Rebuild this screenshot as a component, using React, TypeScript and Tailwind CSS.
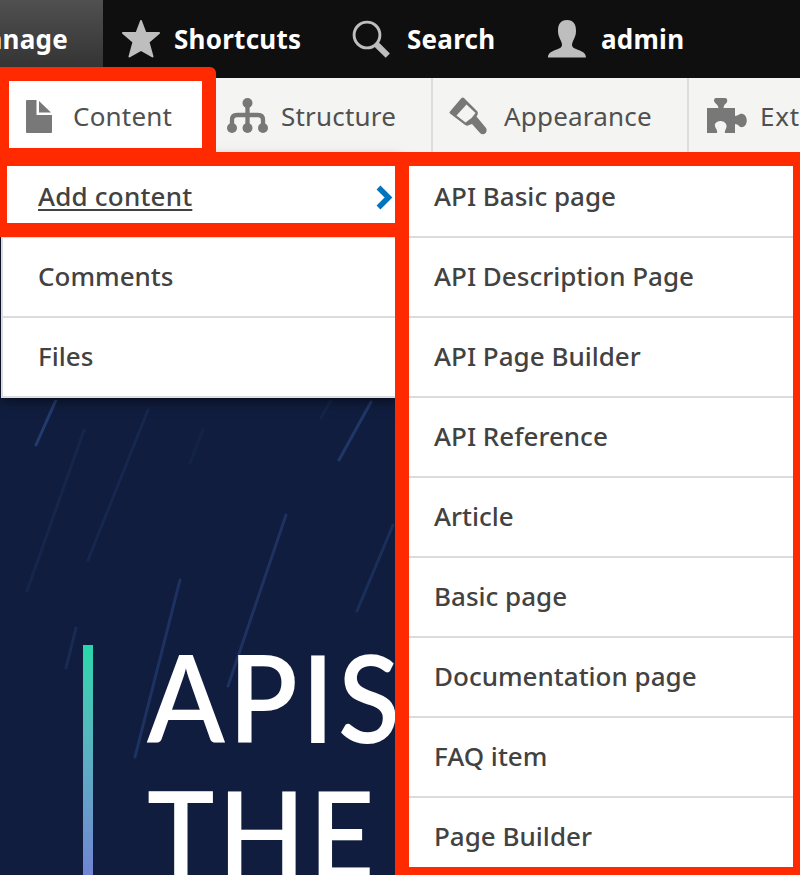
import type { ReactNode } from 'react';

const contentTypes = [
  'API Basic page',
  'API Description Page',
  'API Page Builder',
  'API Reference',
  'Article',
  'Basic page',
  'Documentation page',
  'FAQ item',
  'Page Builder',
];

const streaks = [
  { d: 'M56 0L36 45', o: 0.7 },
  { d: 'M84 30L27 191', o: 0.22 },
  { d: 'M148 10L88 160', o: 0.25 },
  { d: 'M203 30L190 63', o: 0.15 },
  { d: 'M371 2L339 60', o: 0.6 },
  { d: 'M331 0L321 18', o: 0.2 },
  { d: 'M286 115L228 286', o: 0.5 },
  { d: 'M393 125L357 211', o: 0.4 },
  { d: 'M180 180L135 357', o: 0.5 },
  { d: 'M76 228L66 268', o: 0.35 },
];

function ToolbarItem({ icon, label, className }: { icon: ReactNode; label: string; className: string }) {
  return (
    <a className={`flex h-full shrink-0 items-center ${className}`}>
      {icon}
      <span>{label}</span>
    </a>
  );
}

export default function App() {
  return (
    <div className="relative flex h-[875px] w-[800px] flex-col overflow-hidden bg-[#101d3e] font-['Noto_Sans','Open_Sans',sans-serif] text-[26px] leading-[40px] font-medium">
      <header className="flex h-[78px] shrink-0 bg-[#0f0f0f] font-bold tracking-[0.25px] text-white">
        <div className="flex w-[103px] shrink-0 items-center justify-end overflow-hidden bg-linear-to-b from-[#505050] to-[#303030] pr-[35px]">
          <span>Manage</span>
        </div>
        <ToolbarItem
          label="Shortcuts"
          className="w-[230px] gap-[14px] pl-[19px]"
          icon={
            <svg width="38" height="40" viewBox="0 0 38 40" fill="#bebebe" stroke="#bebebe" strokeWidth="2" strokeLinejoin="round">
              <path d="M19 2L23.5 14H37L26.5 23L30.5 37.500L19 31L7.500 37.500L11.500 23L1 14H14.500Z" />
            </svg>
          }
        />
        <ToolbarItem
          label="Search"
          className="w-[195px] gap-[16px] pl-[19px]"
          icon={
            <svg width="39" height="39" viewBox="0 0 39 39" fill="none" stroke="#bebebe">
              <circle cx="15" cy="15" r="12.900" strokeWidth="2.900" />
              <path d="M23.500 23.500L35.800 35.600" strokeWidth="6" />
            </svg>
          }
        />
        <ToolbarItem
          label="admin"
          className="gap-[15px] pl-[20px]"
          icon={
            <svg width="38" height="38" viewBox="0 0 38 38" fill="#bebebe">
              <path d="M19 0C12.500 0 10 4 10 11C10 18 14 20.500 14 25C13.500 31 0 29 0 37.500H38C38 29 24.500 31 24 25C24 20.500 28 18 28 11C28 4 25.500 0 19 0Z" />
            </svg>
          }
        />
      </header>

      <nav className="flex h-[74px] shrink-0 bg-[#f4f4f2] font-normal tracking-[0.2px] text-[#505050]">
        <ToolbarItem
          label="Content"
          className="w-[216px] gap-[21px] bg-white pt-[2px] pl-[26px]"
          icon={
            <svg width="26" height="33" viewBox="0 0 26 33" fill="#787878">
              <path d="M1 0H10.500V15H26V32Q26 33 25 33H1Q0 33 0 32V1Q0 0 1 0ZM13 1L25 12.500H13Z" />
            </svg>
          }
        />
        <ToolbarItem
          label="Structure"
          className="w-[217px] gap-[13px] border-r-2 border-[#dcdcdc] pt-[2px] pl-[11px]"
          icon={
            <svg width="41" height="36" viewBox="0 0 41 36" fill="#787878">
              <path d="M5 29V22Q5 17 10 17H31Q36 17 36 22V29M20.500 5V30" fill="none" stroke="#787878" strokeWidth="4.300" />
              <circle cx="20.500" cy="5" r="5" />
              <circle cx="5" cy="30" r="5" />
              <circle cx="20.500" cy="30" r="5" />
              <circle cx="36" cy="30" r="5" />
            </svg>
          }
        />
        <ToolbarItem
          label="Appearance"
          className="w-[256px] gap-[17px] border-r-2 border-[#dcdcdc] pt-[2px] pl-[16px]"
          icon={
            <svg width="38" height="38" viewBox="0 0 38 38" fill="#787878">
              <path d="M1 14.500L12.500 1Q14 0 15 1L28.500 14.500Q29.500 17 27.500 19.500L37 31Q39 35 35 37Q33 38 31 36L23 27L19 28.500Q17 29 15.500 27.500L1 16.500Q0 15.500 1 14.500Z" />
              <path d="M7.500 18.500L17.500 7.500L26.500 16L22.500 21L16.500 25.500Z" fill="#f4f4f2" />
            </svg>
          }
        />
        <ToolbarItem
          label="Extend"
          className="gap-[13px] pt-[2px] pl-[18px] tracking-[0.8px]"
          icon={
            <svg width="40" height="36" viewBox="0 0 40 36" fill="#787878">
              <path d="M9 0H18Q21 0 20 4C19 6 17 6 16.500 10H28V18C32 18 32 15 36 16C41 18 41 27 36 29C32 30 32 26 28 26V35H18C17 32 21 30 19 26C17 22 10 22 8 26C7 30 11 31 10 35H0V10H11.500C11 6 8 6 7 3Q7 0 9 0Z" />
            </svg>
          }
        />
      </nav>

      <main className="relative flex min-h-0 flex-1 flex-col">
        <svg className="absolute top-[248px] left-0" width="395" height="475" fill="none" stroke="#294882" strokeWidth="3" strokeLinecap="round">
          {streaks.map((s) => (
            <path key={s.d} d={s.d} opacity={s.o} />
          ))}
        </svg>
        <section className="relative flex items-start pt-[493px] pl-[83px]">
          <div className="h-[300px] w-[10px] bg-linear-to-b from-[#26d7aa] to-[#7866dd]" />
          <h1 className="-mt-[17px] ml-[54px] origin-left scale-x-[.93] font-['Lato',sans-serif] text-[122px] leading-[136px] font-semibold whitespace-nowrap text-white">
            <span className="block tracking-[4px]">APIS</span>
            <span className="block tracking-[4px]">THE</span>
          </h1>
        </section>

        <div className="absolute inset-0 flex items-start pt-[6px] text-[#424242]">
          <ul className="ml-px w-[400px] border-l-2 border-[#dcdcdc] bg-white shadow-[0_2px_12px_rgba(0,0,0,.6)]">
            <li className="flex h-[80px] items-center justify-between border-b-2 border-[#dcdcdc] pr-[8px] pb-[2px] pl-[35px]">
              <a className="tracking-[0.2px] underline decoration-2 underline-offset-[3px]">Add content</a>
              <svg className="mt-[3px]" width="17" height="25" viewBox="0 0 17 25" fill="none" stroke="#0074bd" strokeWidth="5.500">
                <path d="M2.500 2.500L12.500 12.500L2.500 22.500" />
              </svg>
            </li>
            <li className="flex h-[80px] items-center border-b-2 border-[#dcdcdc] pb-[2px] pl-[35px]">Comments</li>
            <li className="flex h-[80px] items-center border-b-2 border-[#dcdcdc] pb-[2px] pl-[35px]">Files</li>
          </ul>
          <ul className="w-[399px] bg-white">
            {contentTypes.map((label) => (
              <li key={label} className="flex h-[80px] items-center border-b-2 border-[#dcdcdc] pb-[2px] pl-[33px]">
                {label}
              </li>
            ))}
          </ul>
        </div>
      </main>

      <div className="absolute top-[67px] -left-[5px] h-[95px] w-[221px] rounded-[6px] border-[14px] border-[#ff2a00]" />
      <div className="absolute top-[152px] -left-[7px] h-[85px] w-[416px] border-[14px] border-[#ff2a00]" />
      <div className="absolute top-[152px] left-[395px] h-[729px] w-[412px] border-[14px] border-[#ff2a00]" />
    </div>
  );
}
